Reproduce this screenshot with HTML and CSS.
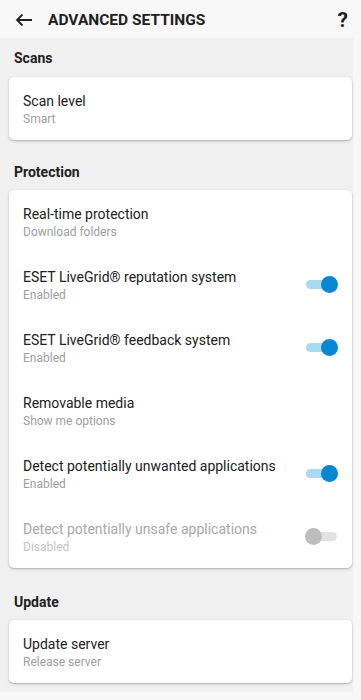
FILE: index.html
```html
<!DOCTYPE html>
<html>
<head>
<meta charset="utf-8">
<link rel="stylesheet" href="styles.css">
</head>
<body>
<div class="page">
  <header class="topbar">
    <svg class="back" width="18" height="14" viewBox="0 0 18 14"><path d="M17 7H2M7.5 1.5L2 7l5.5 5.5" fill="none" stroke="#212121" stroke-width="1.8"/></svg>
    <h1 class="title">ADVANCED SETTINGS</h1>
    <span class="help">?</span>
  </header>
  <main class="content">
    <h2 class="section">Scans</h2>
    <div class="card">
      <div class="row"><div class="text"><div class="name">Scan level</div><div class="sub">Smart</div></div></div>
    </div>
    <h2 class="section">Protection</h2>
    <div class="card">
      <div class="row"><div class="text"><div class="name">Real-time protection</div><div class="sub">Download folders</div></div></div>
      <div class="row"><div class="text"><div class="name">ESET LiveGrid® reputation system</div><div class="sub">Enabled</div></div><span class="toggle on"></span></div>
      <div class="row"><div class="text"><div class="name">ESET LiveGrid® feedback system</div><div class="sub">Enabled</div></div><span class="toggle on"></span></div>
      <div class="row"><div class="text"><div class="name">Removable media</div><div class="sub">Show me options</div></div></div>
      <div class="row"><div class="text"><div class="name">Detect potentially unwanted applications</div><div class="sub">Enabled</div></div><span class="toggle on"></span></div>
      <div class="row disabled"><div class="text"><div class="name">Detect potentially unsafe applications</div><div class="sub">Disabled</div></div><span class="toggle off"></span></div>
    </div>
    <h2 class="section last">Update</h2>
    <div class="card">
      <div class="row"><div class="text"><div class="name">Update server</div><div class="sub">Release server</div></div></div>
    </div>
  </main>
</div>
</body>
</html>
```
FILE: styles.css
```css
* { box-sizing: border-box; }
html, body { margin: 0; padding: 0; }
body {
  background: #f7f7f7;
  font-family: Roboto, "Noto Sans", sans-serif;
  color: #212121;
}
.page { width: 361px; height: 700px; overflow: hidden; }
.topbar {
  height: 38px;
  display: flex;
  align-items: center;
  padding: 2px 13px 0 15px;
  background: #f8f8f8;
}
.back { display: block; margin-right: 15px; }
.title {
  margin: 0;
  flex: 1;
  font-size: 15.5px;
  font-weight: 700;
  color: #212121;
}
.help {
  font-size: 21px;
  font-weight: 700;
  color: #212121;
  line-height: 1;
}
.content {
  width: 353px;
  height: 654px;
  background: #f0f0f0;
  padding: 9px 0 0 9px;
}
.section {
  margin: 0;
  padding-left: 5px;
  font-size: 14px;
  font-weight: 700;
  line-height: 22px;
  height: 30px;
  color: #212121;
}
.section ~ .section { margin-top: 21px; height: 29px; }
.section.last { margin-top: 23px; }
.card {
  width: 343px;
  background: #fff;
  border-radius: 5px;
  box-shadow: 0 1px 3px rgba(0,0,0,0.22), 0 1px 1px rgba(0,0,0,0.08);
}
.row {
  height: 63px;
  display: flex;
  align-items: center;
  padding: 0 15px 0 14px;
}
.text { flex: 1; align-self: flex-start; margin-top: 16px; }
.name { font-size: 14px; line-height: 17px; color: #212121; }
.sub { font-size: 12px; line-height: 17px; margin-top: 1px; color: #9e9e9e; }
.disabled .name { color: #a8a8a8; }
.disabled .sub { color: #c4c4c4; }
.toggle {
  position: relative;
  width: 31px;
  height: 9px;
  border-radius: 5px;
  flex: none;
}
.toggle::after {
  content: "";
  position: absolute;
  top: -4px;
  width: 17px;
  height: 17px;
  border-radius: 50%;
}
.toggle.on { background: #a9daf2; }
.toggle.on::after { right: -1px; background: #0787d2; }
.toggle.off { background: #e2e2e2; }
.toggle.off::after { left: -1px; background: #bdbdbd; }
```
